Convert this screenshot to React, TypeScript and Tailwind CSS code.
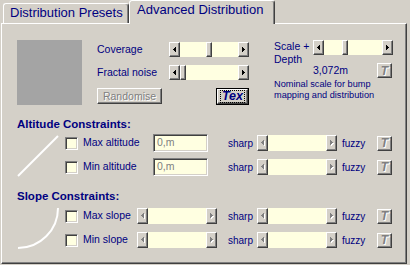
import React from 'react';

// classic win32 bevels
const raised =
  'border border-t-white border-l-white border-r-[#404040] border-b-[#404040] shadow-[inset_-1px_-1px_0_#808080]';
const sunken =
  'border border-t-[#808080] border-l-[#808080] border-r-white border-b-white shadow-[inset_1px_1px_0_#404040,inset_-1px_-1px_0_#d4d0c8]';

const ArrowGlyph: React.FC<{ left?: boolean; disabled?: boolean }> = ({ left, disabled }) => {
  const cols = left
    ? [
        [0, 2, 1],
        [1, 1, 3],
        [2, 0, 5],
      ]
    : [
        [0, 0, 5],
        [1, 1, 3],
        [2, 2, 1],
      ];
  return (
    <svg width="4" height="6" viewBox="0 0 4 6" shapeRendering="crispEdges">
      {disabled &&
        cols.map(([x, y, h], i) => <rect key={'s' + i} x={x + 1} y={y + 1} width={1} height={h} fill="#ffffff" />)}
      {cols.map(([x, y, h], i) => (
        <rect key={i} x={x} y={y} width={1} height={h} fill={disabled ? '#808080' : '#000000'} />
      ))}
    </svg>
  );
};

const ScrollBar: React.FC<{ thumb?: number; disabled?: boolean }> = ({ thumb, disabled }) => (
  <div className={`flex w-[80px] shrink-0 ${disabled ? 'h-[16px]' : 'h-[15px]'}`}>
    <div className={`w-[11px] h-full flex items-center justify-center bg-[#d4d0c8] ${raised}`}>
      <ArrowGlyph left disabled={disabled} />
    </div>
    <div className="flex-1 flex bg-[#ffffe1]">
      {thumb !== undefined && (
        <>
          <div style={{ width: thumb }} />
          <div className={`w-[6px] h-full bg-[#d4d0c8] ${raised}`} />
        </>
      )}
    </div>
    <div className={`w-[11px] h-full flex items-center justify-center bg-[#d4d0c8] ${raised}`}>
      <ArrowGlyph disabled={disabled} />
    </div>
  </div>
);

const CheckBox = () => <div className={`w-[13px] h-[13px] shrink-0 bg-[#ffffe1] ${sunken}`} />;

const TButton = () => (
  <div className={`w-[15px] h-[15px] shrink-0 flex items-center justify-center bg-[#d4d0c8] ${raised}`}>
    <span className="text-[12px] leading-[12px] font-bold italic text-[#808080] [text-shadow:1px_1px_0_#ffffff]">T</span>
  </div>
);

const Field = () => (
  <div className={`w-[55px] h-[18px] shrink-0 bg-[#ffffe1] pl-[3px] text-[10.5px] leading-[15px] text-[#808080] ${sunken}`}>
    0,m
  </div>
);

const SharpFuzzy = () => (
  <>
    <span className="w-[29px] shrink-0 text-[10px]">sharp</span>
    <ScrollBar disabled />
    <span className="ml-[5px] w-[35px] shrink-0 text-[10px]">fuzzy</span>
    <TButton />
  </>
);

export default function App() {
  return (
    <div className="w-[410px] h-[265px] bg-[#d4d0c8] overflow-hidden text-[#000080] font-['Liberation_Sans',Arial,sans-serif] select-none">
      {/* tabs */}
      <div className="flex items-end h-[23px] pl-[3px]">
        <div className="w-[126px] h-[20px] rounded-t-[3px] border-t border-l border-r border-t-white border-l-white border-r-[#404040] shadow-[inset_-1px_0_0_#808080] pl-[6px] pt-[1px] text-[13px] leading-[16px]">
          Distribution Presets
        </div>
        <div className="relative z-10 -mb-[1px] w-[146px] h-[24px] bg-[#d4d0c8] rounded-t-[3px] border-t border-l border-r border-t-white border-l-white border-r-[#404040] shadow-[inset_-1px_0_0_#808080] pl-[7px] pt-[1px] text-[13px] leading-[16px]">
          Advanced Distribution
        </div>
      </div>

      {/* panel */}
      <div className="ml-[1px] w-[406px] h-[241px] border border-t-white border-l-white border-r-[#404040] border-b-[#404040] shadow-[inset_-1px_-1px_0_#808080]">
        {/* top section */}
        <div className="flex pt-[16px] pl-[15px]">
          <div className="w-[65px] h-[65px] shrink-0 bg-[#a4a4a4]" />

          <div className="ml-[15px] mt-[2px] w-[152px] flex flex-col">
            <div className="flex items-center h-[15px]">
              <span className="w-[72px] text-[10.5px]">Coverage</span>
              <ScrollBar thumb={26} />
            </div>
            <div className="flex items-center h-[15px] mt-[8px]">
              <span className="w-[72px] text-[10.5px]">Fractal noise</span>
              <ScrollBar thumb={0} />
            </div>
            <div className="flex justify-between items-start mt-[8px]">
              <div className={`w-[65px] h-[16px] flex items-center justify-center bg-[#d4d0c8] ${raised}`}>
                <span className="text-[10.5px] leading-[12px] text-[#808080] [text-shadow:1px_1px_0_#ffffff]">Randomise</span>
              </div>
              <div className="w-[33px] h-[17px] border border-black">
                <div className={`w-full h-full flex items-center justify-center bg-[#d4d0c8] ${raised}`}>
                  <span className="px-[1px] border border-dotted border-black text-[12.5px] leading-[11px] font-bold italic">
                    Tex
                  </span>
                </div>
              </div>
            </div>
          </div>

          <div className="ml-[25px] flex flex-col">
            <div className="flex">
              <div className="w-[39px] text-[10.5px] leading-[13px]">
                Scale +
                <br />
                Depth
              </div>
              <div className="flex flex-col">
                <ScrollBar thumb={18} />
                <div className="flex justify-between items-center w-[79px] mt-[8px]">
                  <span className="text-[10.5px]">3,072m</span>
                  <TButton />
                </div>
              </div>
            </div>
            <div className="text-[9.2px] leading-[11px]">
              Nominal scale for bump
              <br />
              mapping and distribution
            </div>
          </div>
        </div>

        {/* altitude */}
        <div className="pl-[15px] mt-[12px] text-[11.5px] leading-[14px] font-bold">Altitude Constraints:</div>
        <div className="flex pl-[15px] mt-[2px]">
          <svg width="42" height="44" viewBox="0 0 42 44" className="shrink-0 overflow-visible">
            <line x1="1" y1="43" x2="41" y2="3" stroke="#ffffff" strokeWidth="2" />
          </svg>
          <div className="ml-[6px] flex flex-col gap-[4px]">
            <div className="flex items-center h-[20px]">
              <CheckBox />
              <span className="ml-[5px] w-[70px] text-[10.5px]">Max altitude</span>
              <Field />
              <span className="w-[20px]" />
              <SharpFuzzy />
            </div>
            <div className="flex items-center h-[20px]">
              <CheckBox />
              <span className="ml-[5px] w-[70px] text-[10.5px]">Min altitude</span>
              <Field />
              <span className="w-[20px]" />
              <SharpFuzzy />
            </div>
          </div>
        </div>

        {/* slope */}
        <div className="pl-[15px] mt-[12px] text-[11.5px] leading-[14px] font-bold">Slope Constraints:</div>
        <div className="flex pl-[15px] mt-[3px]">
          <svg width="42" height="44" viewBox="0 0 42 44" className="shrink-0 overflow-visible">
            <path d="M41 2 A40 40 0 0 1 1 42" fill="none" stroke="#ffffff" strokeWidth="2" />
          </svg>
          <div className="ml-[6px] flex flex-col gap-[4px]">
            <div className="flex items-center h-[20px]">
              <CheckBox />
              <span className="ml-[5px] w-[54px] text-[10.5px]">Max slope</span>
              <ScrollBar disabled />
              <span className="w-[11px]" />
              <SharpFuzzy />
            </div>
            <div className="flex items-center h-[20px]">
              <CheckBox />
              <span className="ml-[5px] w-[54px] text-[10.5px]">Min slope</span>
              <ScrollBar disabled />
              <span className="w-[11px]" />
              <SharpFuzzy />
            </div>
          </div>
        </div>
      </div>
    </div>
  );
}
